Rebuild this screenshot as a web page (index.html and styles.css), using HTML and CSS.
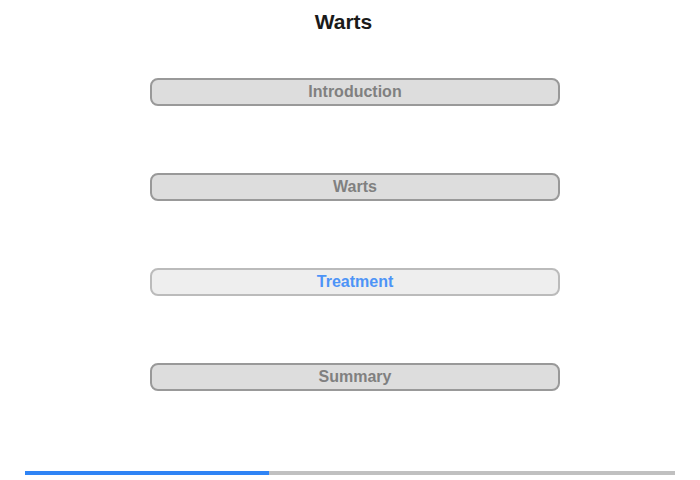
FILE: index.html
```html
<!DOCTYPE html>
<html lang="en">
<head>
  <meta charset="UTF-8">
  <title>Warts</title>
  <link rel="stylesheet" href="styles.css">
</head>
<body>

  <h1 class="title">Warts</h1>

  <div class="menu">
    <button class="menu-item">Introduction</button>
    <button class="menu-item">Warts</button>
    <button class="menu-item current">Treatment</button>
    <button class="menu-item">Summary</button>
  </div>

  <div class="progress">
    <div class="progress-fill" style="width: 37.5%"></div>
  </div>

</body>
</html>
```

FILE: styles.css
```css
body {
  margin: 0;
  font-family: "Liberation Sans", Arial, sans-serif;
  background-color: white;
  width: 700px;
  height: 480px;
}

.title {
  margin: 0;
  padding: 10px 13px 0 0;
  height: 34px;
  font-size: 21px;
  line-height: 24px;
  font-weight: bold;
  color: #1a1a1a;
  text-align: center;
}

.menu {
  display: flex;
  flex-direction: column;
  gap: 67px;
  margin: 34px 0 0 150px;
  width: 410px;
}

.menu-item {
  height: 28px;
  padding: 0;
  border: 2px solid #999;
  border-radius: 8px;
  background-color: #ddd;
  color: #808080;
  font-family: inherit;
  font-size: 16px;
  font-weight: bold;
  cursor: pointer;
}

.menu-item.current {
  border-color: #bbb;
  background-color: #eee;
  color: #4d94f7;
}

.progress {
  margin: 80px 0 0 25px;
  width: 650px;
  height: 4px;
  background-color: #c0c0c0;
}

.progress-fill {
  height: 100%;
  background-color: #2f84f5;
}
```
